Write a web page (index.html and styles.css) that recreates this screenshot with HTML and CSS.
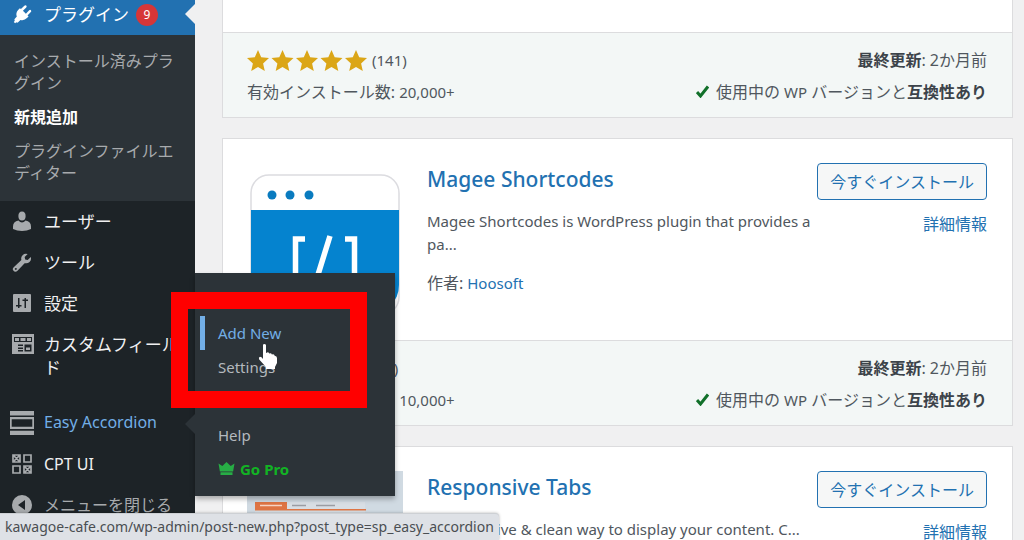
FILE: index.html
```html
<!DOCTYPE html>
<html lang="ja">
<head>
<meta charset="utf-8">
<meta name="viewport" content="width=device-width, initial-scale=1">
<title>プラグインを追加</title>
<link rel="stylesheet" href="styles.css">
</head>
<body>
<div class="layout">
  <nav class="sidebar">
    <a class="item current" href="#">
      <svg class="icon" viewBox="1 1.500 17 17"><path d="M13.1 4.400 10.300 7.200l2.500 2.500 2.800-2.800q.8-.8 1.500-.1t-.1 1.600l-2.800 2.800.9.9-1.400 1.400q-2.300 2.300-5.500 1.500l-2 2q-.7.7-1.600 0l-.9.9-1.200-1.200.9-.9q-.8-.9 0-1.700l1.700-1.900Q3.900 9.200 6.200 6.500L7.700 5.200l.9.6L11.500 2.900q.8-.8 1.600-.1t0 1.600z"/></svg>
      <span class="label">プラグイン</span><span class="badge">9</span>
    </a>
    <div class="submenu">
      <a href="#">インストール済みプラグイン</a>
      <a class="active" href="#">新規追加</a>
      <a href="#">プラグインファイルエディター</a>
    </div>
    <a class="item" href="#">
      <svg class="icon" viewBox="0 0 20 20"><ellipse cx="10" cy="5" rx="3.600" ry="4.500"/><path d="M6.500 9.500Q8 11.500 10 11.500t3.500-2q5.500 1 5.500 6v2.500Q15 20 10 20t-9-2v-2.500q0-5 5.500-6z"/></svg>
      <span class="label">ユーザー</span>
    </a>
    <a class="item" href="#">
      <svg class="icon" viewBox="0.500 0.500 18.500 18.500"><path d="M16.700 9.800q-1.900 1.700-4.500 1L5.600 17.800q-1.100 1.100-2.400.9T1.300 17q-.4-1.400.8-2.500l7.100-6.600q-.8-2.600 1.100-4.500 1.900-1.900 4.700-1l-2.800 2.800.5 2.200 2.300.6 2.900-2.800q.8 2.700-1.200 4.600zM4.700 16.800q.5-.6 0-1.200t-1.200 0-.1 1.200 1.300 0z" fill-rule="evenodd"/></svg>
      <span class="label">ツール</span>
    </a>
    <a class="item" href="#">
      <svg class="icon" viewBox="0 0 20 20"><path fill-rule="evenodd" d="M2 1h16q1 0 1 1v16q0 1-1 1H2q-1 0-1-1V2q0-1 1-1zm4 4v7H4v1.500h2V15h1.500v-1.500h2V12h-2V5zm6.500 0v1.500h-2V8h2v7H14V8h2V6.500h-2V5z"/></svg>
      <span class="label">設定</span>
    </a>
    <a class="item" href="#">
      <svg class="icon wide" viewBox="0 0 22 20"><path fill-rule="evenodd" d="M0 0h22v20H0zm2 3v5h18V3zm1 1h4v3H3zm5.500 0h5v3h-5zM15 4h4v3h-4zM6 10.500V12h5v-1.500zm0 3V15h5v-1.500zm0 2.500v1.500h5V16zm6.500-5.500v7h7v-7zm1.500 3h4V16h-4z"/></svg>
      <span class="label">カスタムフィールド</span>
    </a>
    <a class="item spaced hovered" href="#">
      <svg class="icon big" viewBox="0 0 24 24"><path fill-rule="evenodd" d="M0 0h24v4.500H0zm0 6h24v12H0zm1.700 2.300v7.500h20.600V8.300zM0 19.700h24V24H0z"/></svg>
      <span class="label">Easy Accordion</span>
    </a>
    <a class="item" href="#">
      <svg class="icon" viewBox="0 0 20 20"><g fill="none" stroke="currentColor" stroke-width="1.700"><path d="M1 1h7v7H1zM12 1h7v7h-7zM1 12h7v7H1zM12 12h7v7h-7zM1 1l7 7M8 1 1 8M12 12l7 7M19 12l-7 7"/></g></svg>
      <span class="label">CPT UI</span>
    </a>
    <button class="item collapse" type="button">
      <svg class="icon" viewBox="0 0 20 20"><path fill-rule="evenodd" d="M10 0a10 10 0 1 1 0 20 10 10 0 0 1 0-20zm3 5-7 5 7 5z"/></svg>
      <span class="label">メニューを閉じる</span>
    </button>
  </nav>

  <main class="content">
    <article class="card first">
      <div class="card-foot">
        <div class="stats">
          <div class="rating"><svg class="stars" viewBox="0 0 120 22" role="img" aria-label="5つ星"><defs><path id="star" d="m11 0 3.200 7.300 7.800.8-5.900 5.300L17.800 21 11 17l-6.800 4 1.700-7.600L0 8.100l7.800-.8z"/></defs><use href="#star"/><use href="#star" x="24.500"/><use href="#star" x="49"/><use href="#star" x="73.500"/><use href="#star" x="98"/></svg><span>(141)</span></div>
          <div>有効インストール数: <span class="latin">20,000+</span></div>
        </div>
        <div class="stats right">
          <div><strong>最終更新</strong>: 2か月前</div>
          <div><svg class="check" viewBox="0 0 13 13"><path d="M1 7l3.500 4L12 1.500" /></svg>使用中の <span class="latin">WP</span> バージョンと<strong>互換性あり</strong></div>
        </div>
      </div>
    </article>

    <article class="card">
      <div class="card-body">
        <svg class="thumb" viewBox="0 0 156 156"><rect x="4" y="12" width="148" height="140" rx="18" fill="#fff" stroke="#dcdce0" stroke-width="1.500"/><path d="M4 47h148v75a30 30 0 0 1-30 30H34a30 30 0 0 1-30-30z" fill="#0583cf"/><g fill="#0a7bbf"><circle cx="25" cy="32" r="4.500"/><circle cx="43" cy="32" r="4.500"/><circle cx="62" cy="32" r="4.500"/></g><path d="M58 76H48.500v54H58M83 73 65 131M98 76h9.500v54H98" fill="none" stroke="#fff" stroke-width="5.500"/></svg>
        <div class="info">
          <h3><a href="#">Magee Shortcodes</a></h3>
          <p>Magee Shortcodes is WordPress plugin that provides a pa...</p>
          <p><span class="jp">作者:</span> <a href="#">Hoosoft</a></p>
        </div>
        <div class="actions">
          <button type="button">今すぐインストール</button>
          <a href="#">詳細情報</a>
        </div>
      </div>
      <div class="card-foot">
        <div class="stats">
          <div class="rating"><svg class="stars" viewBox="0 0 120 22" role="img" aria-label="5つ星"><use href="#star"/><use href="#star" x="24.500"/><use href="#star" x="49"/><use href="#star" x="73.500"/><use href="#star" x="98"/></svg><span>(28)</span></div>
          <div>有効インストール数: <span class="latin">10,000+</span></div>
        </div>
        <div class="stats right">
          <div><strong>最終更新</strong>: 2か月前</div>
          <div><svg class="check" viewBox="0 0 13 13"><path d="M1 7l3.500 4L12 1.500" /></svg>使用中の <span class="latin">WP</span> バージョンと<strong>互換性あり</strong></div>
        </div>
      </div>
    </article>

    <article class="card">
      <div class="card-body">
        <svg class="thumb" viewBox="0 0 156 156"><path d="M0 0h156v156H0z" fill="#d0dae2"/><path d="M8 31h110v80H8z" fill="#d8dee4"/><path d="M8 31h32v7h79v1.500H8z" fill="#de7443"/><path d="M13 34.500h22" stroke="#f6d3c2" stroke-width="1.500"/><path d="M45 34.500h14M69 34.500h19" stroke="#9a9da3" stroke-width="1.500"/></svg>
        <div class="info">
          <h3><a href="#">Responsive Tabs</a></h3>
          <p>A responsive &amp; clean way to display your content. C...</p>
        </div>
        <div class="actions">
          <button type="button">今すぐインストール</button>
          <a href="#">詳細情報</a>
        </div>
      </div>
    </article>
  </main>
</div>

<div class="flyout">
  <a class="focus" href="#">Add New</a>
  <a href="#">Settings</a>
  <a class="after-gap" href="#">Help</a>
  <a class="pro" href="#"><svg class="crown" viewBox="0 0 16 13"><path d="m0 1.500 3.800 2.500L8 0l4.200 4L16 1.500l-1.400 8H1.400zM2 10.300h12V13H2z"/></svg>Go Pro</a>
</div>
<div class="highlight"></div>
<svg class="pointer" viewBox="0 0 20 27"><path d="M5 1.500Q7 .2 8 2v8l1.200-.6q1.500-.3 2 1.200 2-1 2.700 1 2-.8 2.800 1.200 2.300.2 2.300 2.200v5l-2 4v2H8v-2L1.200 16.500q-1-2 .8-2.700 1.500 0 3 2.200z"/></svg>
<div class="status">kawagoe-cafe.com/wp-admin/post-new.php?post_type=sp_easy_accordion</div>
</body>
</html>
```

FILE: styles.css
```css
* { box-sizing: border-box; }

body {
  margin: 0;
  height: 100vh;
  overflow: hidden;
  background: #f0f0f1;
  color: #50575e;
  font: 15px/24px "Noto Sans", "Noto Sans CJK JP", sans-serif;
}

a { color: #2271b1; text-decoration: none; }

.layout { display: flex; height: 100vh; overflow: hidden; }

/* Admin menu */
.sidebar {
  flex: 0 0 195px;
  background: #1d2327;
}

.item {
  display: flex;
  align-items: flex-start;
  width: 100%;
  padding: 9px 0 9px 10px;
  color: #f0f0f1;
  font: 17px/23px "Noto Sans", "Noto Sans CJK JP", sans-serif;
}

.icon {
  flex: none;
  width: 20px;
  height: 20px;
  margin: 1px 12px 0 2px;
  fill: #a7aaad;
  color: #a7aaad;
}

.icon.wide { width: 22px; margin: 1px 10px 0 2px; }
.icon.big { width: 24px; height: 24px; margin: 0 10px 0 0; }

.current {
  position: relative;
  padding-top: 3px;
  background: #2271b1;
  color: #fff;
}
.current .icon { fill: #fff; }
.current::after {
  content: "";
  position: absolute;
  right: 0;
  top: 4px;
  border: 10px solid transparent;
  border-left-width: 0;
  border-right-color: #f0f0f1;
}

.badge {
  width: 22px;
  margin: 1px 0 0 7px;
  border-radius: 11px;
  background: #d63638;
  font-size: 12px;
  line-height: 22px;
  text-align: center;
}

.submenu {
  padding: 9px 14px 11px;
  background: #2c3338;
  font-size: 16px;
  line-height: 22px;
}
.submenu a { display: block; padding: 6px 0; color: #a7aaad; }
.submenu .active { color: #fff; font-weight: bold; }

.spaced { margin-top: 14px; }
.hovered { color: #72aee6; font-size: 16px; }
.hovered + .item { font-size: 16px; }
.collapse { border: 0; background: none; color: #a7aaad; font-size: 16px; text-align: left; }

/* Plugin cards */
.content {
  flex: 1;
  display: flex;
  flex-direction: column;
  gap: 20px;
  min-width: 0;
  padding: 0 11px 0 27px;
}

.card { flex: none; border: 1px solid #dcdcde; background: #fff; }
.card.first { padding-top: 32px; border-top: 0; }

.card-body {
  display: flex;
  align-items: flex-start;
  min-height: 201px;
  padding: 24px 25px 0 24px;
}
.thumb { flex: none; width: 156px; height: 156px; margin-right: 24px; }

.info { flex: 1; min-width: 0; }
.info h3 { margin: 0 0 15px; font-size: 21px; line-height: 32px; font-weight: 500; }
.info p { margin: 0 0 16px; line-height: 23px; }
.jp { font-size: 16px; }

.actions { display: flex; flex-direction: column; align-items: flex-end; gap: 12px; font-size: 16px; }
.actions button {
  height: 37px;
  padding: 0 12px;
  border: 1px solid #2271b1;
  border-radius: 4px;
  background: #f6f7f7;
  color: #2271b1;
  font: 16px/34px "Noto Sans", "Noto Sans CJK JP", sans-serif;
}

.card-foot {
  display: flex;
  justify-content: space-between;
  padding: 15px 25px 13px 24px;
  border-top: 1px solid #dcdcde;
  background: #f3f7f6;
}
.stats { display: flex; flex-direction: column; gap: 8px; font-size: 16px; }
.stats > div { height: 24px; }
.stats.right { text-align: right; }
.latin, .rating { font-size: 15px; }
.rating { display: flex; align-items: flex-end; gap: 5px; }
.stars { width: 120px; height: 22px; fill: #dba617; }
.check { width: 13px; height: 13px; margin-right: 7px; fill: none; stroke: #11702a; stroke-width: 3; }
strong { color: #3c434a; }

/* Menu opened over the page */
.flyout {
  position: absolute;
  left: 195px;
  top: 273px;
  width: 200px;
  padding: 43px 0 10px;
  background: #2c3338;
  box-shadow: 0 3px 5px rgba(0, 0, 0, .3);
  line-height: 34px;
}
.flyout::before {
  content: "";
  position: absolute;
  left: -10px;
  top: 141px;
  border: 10px solid transparent;
  border-left-width: 0;
  border-right-color: #2c3338;
}
.flyout a {
  display: block;
  margin-left: 5px;
  padding-left: 13px;
  border-left: 5px solid transparent;
  color: #b4b9be;
}
.flyout .focus { border-left-color: #72aee6; color: #72aee6; }
.flyout .after-gap { margin-top: 34px; }
.flyout .pro { color: #12b324; font-weight: bold; }
.crown { width: 17px; height: 13px; margin-right: 5px; fill: #27ad45; }

.highlight {
  position: absolute;
  left: 171px;
  top: 292px;
  width: 196px;
  height: 116px;
  border: 17px solid #f00;
}

.pointer { position: absolute; left: 258px; top: 343px; width: 20px; height: 27px; fill: #fff; }

.status {
  position: absolute;
  left: 0;
  bottom: 0;
  padding: 1px 5px 1px 5px;
  border-top: 1px solid #cdd0d4;
  border-radius: 0 4px 0 0;
  background: #dee1e6;
  color: #4a4e52;
  font-size: 14px;
  box-shadow: 0 0 3px rgba(0, 0, 0, .3);
}
```
